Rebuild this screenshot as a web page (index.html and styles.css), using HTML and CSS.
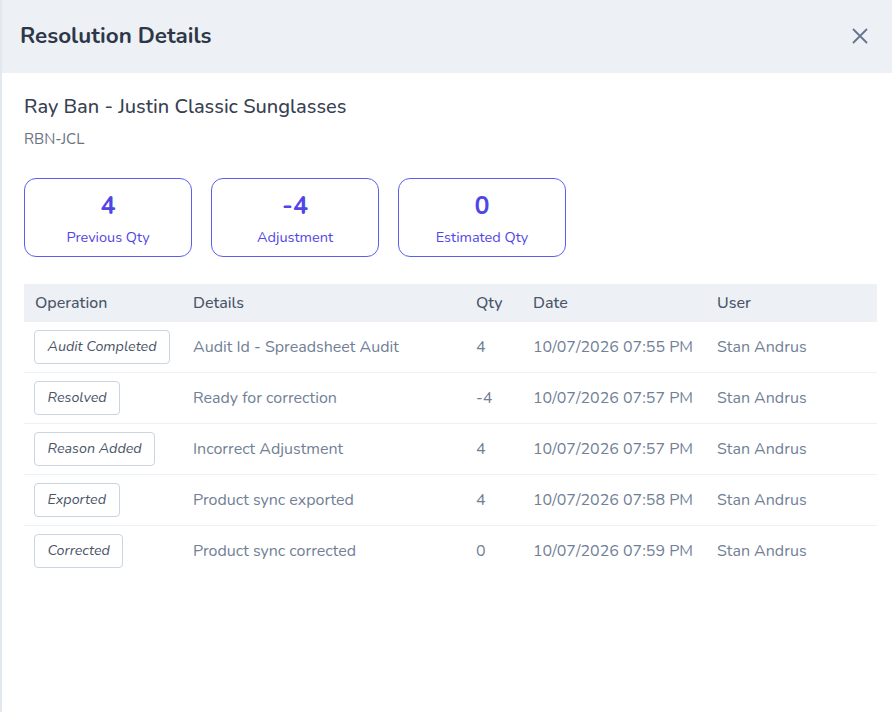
FILE: index.html
```html
<!DOCTYPE html>
<html lang="en">
<head>
    <meta charset="UTF-8">
    <meta name="viewport" content="width=device-width, initial-scale=1.0">
    <title>Resolution Details</title>
    <link rel="stylesheet" href="styles.css">
</head>
<body>
    <div class="modal">
        <div class="modal-header">
            <h1>Resolution Details</h1>
            <button class="close-button" aria-label="Close">
                <svg width="16" height="16" viewBox="0 0 16 16" fill="none" stroke="currentColor" stroke-width="1.8" stroke-linecap="round">
                    <path d="M1.5 1.5 L14.5 14.5 M14.5 1.5 L1.5 14.5"/>
                </svg>
            </button>
        </div>

        <div class="modal-body">
            <h2 class="product-name">Ray Ban - Justin Classic Sunglasses</h2>
            <p class="product-sku">RBN-JCL</p>

            <div class="stats">
                <div class="stat-card">
                    <div class="stat-value">4</div>
                    <div class="stat-label">Previous Qty</div>
                </div>
                <div class="stat-card">
                    <div class="stat-value">-4</div>
                    <div class="stat-label">Adjustment</div>
                </div>
                <div class="stat-card">
                    <div class="stat-value">0</div>
                    <div class="stat-label">Estimated Qty</div>
                </div>
            </div>

            <table class="history-table">
                <thead>
                    <tr>
                        <th class="col-op">Operation</th>
                        <th class="col-details">Details</th>
                        <th class="col-qty">Qty</th>
                        <th class="col-date">Date</th>
                        <th>User</th>
                    </tr>
                </thead>
                <tbody>
                    <tr>
                        <td><span class="badge">Audit Completed</span></td>
                        <td>Audit Id - Spreadsheet Audit</td>
                        <td>4</td>
                        <td>10/07/2026 07:55 PM</td>
                        <td>Stan Andrus</td>
                    </tr>
                    <tr>
                        <td><span class="badge">Resolved</span></td>
                        <td>Ready for correction</td>
                        <td>-4</td>
                        <td>10/07/2026 07:57 PM</td>
                        <td>Stan Andrus</td>
                    </tr>
                    <tr>
                        <td><span class="badge">Reason Added</span></td>
                        <td>Incorrect Adjustment</td>
                        <td>4</td>
                        <td>10/07/2026 07:57 PM</td>
                        <td>Stan Andrus</td>
                    </tr>
                    <tr>
                        <td><span class="badge">Exported</span></td>
                        <td>Product sync exported</td>
                        <td>4</td>
                        <td>10/07/2026 07:58 PM</td>
                        <td>Stan Andrus</td>
                    </tr>
                    <tr>
                        <td><span class="badge">Corrected</span></td>
                        <td>Product sync corrected</td>
                        <td>0</td>
                        <td>10/07/2026 07:59 PM</td>
                        <td>Stan Andrus</td>
                    </tr>
                </tbody>
            </table>
        </div>
    </div>
</body>
</html>
```

FILE: styles.css
```css
* {
    margin: 0;
    padding: 0;
    box-sizing: border-box;
}

body {
    font-family: 'Nunito', 'Lato', 'Noto Sans', sans-serif;
    background: white;
    color: #2d3748;
    height: 100vh;
}

.modal {
    height: 100vh;
    border-left: 2px solid #e2e8f0;
    background: white;
}

.modal-header {
    height: 73px;
    background: #edf1f6;
    display: flex;
    align-items: center;
    justify-content: space-between;
    padding: 0 24px 2px 18px;
}

.modal-header h1 {
    font-size: 22.4px;
    font-weight: 700;
    color: #2d3748;
}

.close-button {
    background: none;
    border: none;
    color: #64748b;
    display: flex;
    cursor: pointer;
}

.modal-body {
    padding: 22px 15px 0 22px;
}

.product-name {
    font-size: 20px;
    font-weight: 500;
    color: #374151;
    line-height: 24px;
}

.product-sku {
    font-size: 15px;
    color: #6b7280;
    margin-top: 10px;
    line-height: 20px;
}

.stats {
    display: flex;
    gap: 19px;
    margin-top: 29px;
}

.stat-card {
    width: 168px;
    height: 79px;
    border: 1px solid #5b5ff0;
    border-radius: 12px;
    text-align: center;
    color: #4f46e5;
    padding-top: 11px;
}

.stat-value {
    font-size: 25px;
    font-weight: 700;
    line-height: 32px;
}

.stat-label {
    font-size: 14.5px;
    margin-top: 5px;
    line-height: 20px;
}

.history-table {
    width: 100%;
    margin-top: 27px;
    border-collapse: collapse;
    font-size: 16px;
    color: #718096;
}

.history-table th {
    background: #edf1f6;
    font-weight: 500;
    text-align: left;
    color: #4a5568;
    height: 37px;
    padding: 1px 10px 0 11px;
}

.history-table td {
    height: 51px;
    padding: 0 10px 0 11px;
    border-top: 1px solid #edf1f6;
}

.history-table td:first-child {
    padding-left: 10px;
}

.col-op {
    width: 158px;
}

.col-details {
    width: 283px;
}

.col-qty {
    width: 57px;
}

.col-date {
    width: 184px;
}

.badge {
    display: inline-block;
    border: 1px solid #cbd5e0;
    border-radius: 4px;
    padding: 0 12.5px;
    line-height: 32px;
    font-size: 14.3px;
    font-style: italic;
    color: #4a5568;
}
```
